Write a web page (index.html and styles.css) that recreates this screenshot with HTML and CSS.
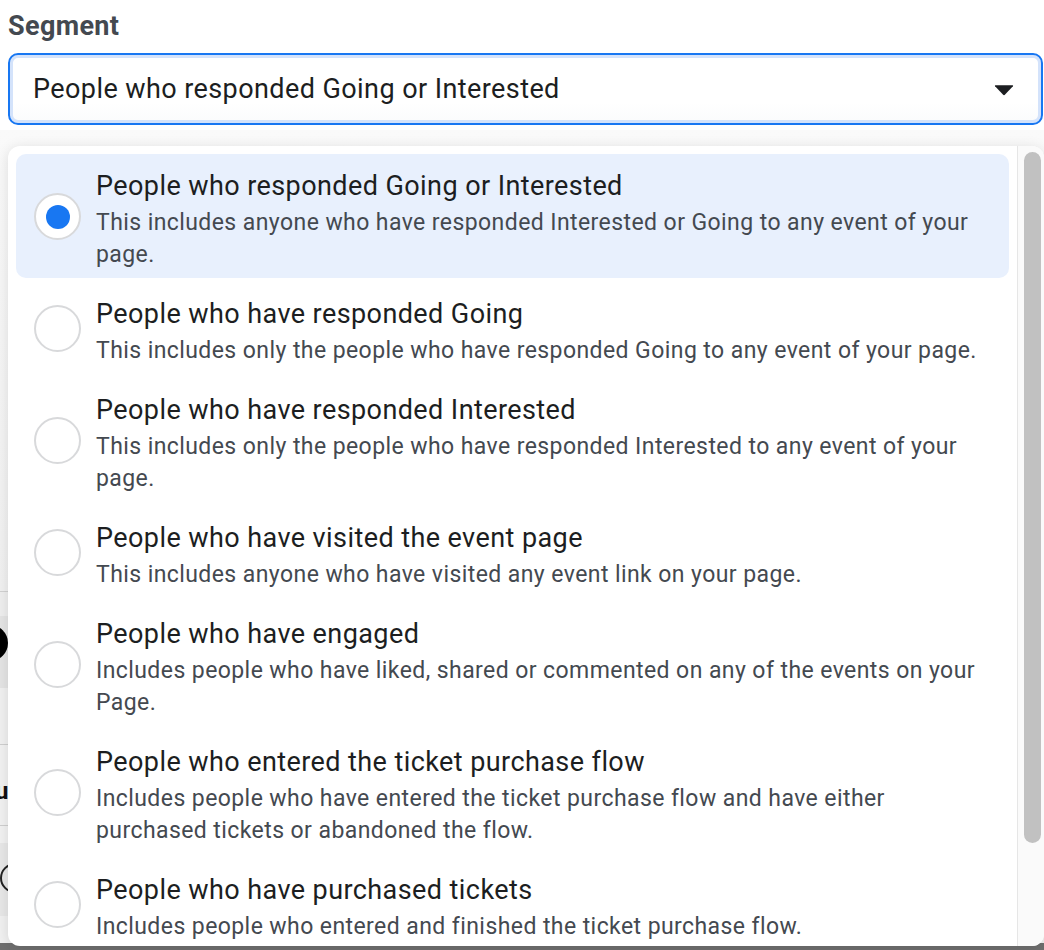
FILE: index.html
```html
<!DOCTYPE html>
<html>
<head>
<meta charset="utf-8">
<link rel="stylesheet" href="styles.css">
</head>
<body>
<div class="page">
  <div class="seg-label">Segment</div>
  <div class="select">
    <span class="select-text">People who responded Going or Interested</span>
    <svg class="caret" width="20" height="12" viewBox="0 0 20 12"><path d="M1.5 1.2 H18.5 Q19.6 1.2 18.9 2.2 L11.1 10.6 Q10 11.7 8.9 10.6 L1.1 2.2 Q0.4 1.2 1.5 1.2 Z" fill="#1c1e21"/></svg>
  </div>

  <div class="behind">
    <div class="b-row b1"></div>
    <div class="b-row b2"></div>
    <div class="b-row b3"><span class="b-dot"></span></div>
    <div class="b-row b4"></div>
    <div class="b-row b5"><span class="b-u">u</span></div>
    <div class="b-row b6"></div>
    <div class="b-row b7"><span class="b-ring"></span></div>
    <div class="b-row b8"></div>
    <div class="b-bottom"></div>
  </div>

  <div class="menu">
    <div class="list">
      <div class="item selected">
        <span class="radio on"></span>
        <div class="txt">
          <div class="title">People who responded Going or Interested</div>
          <div class="desc">This includes anyone who have responded Interested or Going to any event of your page.</div>
        </div>
      </div>
      <div class="item">
        <span class="radio"></span>
        <div class="txt">
          <div class="title">People who have responded Going</div>
          <div class="desc">This includes only the people who have responded Going to any event of your page.</div>
        </div>
      </div>
      <div class="item">
        <span class="radio"></span>
        <div class="txt">
          <div class="title">People who have responded Interested</div>
          <div class="desc">This includes only the people who have responded Interested to any event of your page.</div>
        </div>
      </div>
      <div class="item">
        <span class="radio"></span>
        <div class="txt">
          <div class="title">People who have visited the event page</div>
          <div class="desc">This includes anyone who have visited any event link on your page.</div>
        </div>
      </div>
      <div class="item">
        <span class="radio"></span>
        <div class="txt">
          <div class="title">People who have engaged</div>
          <div class="desc">Includes people who have liked, shared or commented on any of the events on your Page.</div>
        </div>
      </div>
      <div class="item">
        <span class="radio"></span>
        <div class="txt">
          <div class="title">People who entered the ticket purchase flow</div>
          <div class="desc">Includes people who have entered the ticket purchase flow and have either purchased tickets or abandoned the flow.</div>
        </div>
      </div>
      <div class="item">
        <span class="radio"></span>
        <div class="txt">
          <div class="title">People who have purchased tickets</div>
          <div class="desc">Includes people who entered and finished the ticket purchase flow.</div>
        </div>
      </div>
    </div>
    <div class="scrollbar"><div class="thumb"></div></div>
  </div>
</div>
</body>
</html>
```
FILE: styles.css
```css
html, body {
  margin: 0;
  padding: 0;
  background: #ffffff;
}
body {
  font-family: Roboto, "Liberation Sans", Arial, sans-serif;
  color: #1c1e21;
  width: 1044px;
  height: 950px;
  overflow: hidden;
}
.page {
  position: relative;
  width: 1044px;
  height: 950px;
  overflow: hidden;
}
.seg-label {
  padding: 11px 0 0 8px;
  height: 30px;
  line-height: 30px;
  font-size: 27px;
  font-weight: 700;
  letter-spacing: 0.35px;
  color: #444950;
}
.select {
  margin: 12px 1px 0 8px;
  height: 72px;
  box-sizing: border-box;
  border: 2px solid #1877f2;
  border-radius: 10px;
  box-shadow: inset 0 0 0 3px #d4e3fb;
  background: linear-gradient(#ffffff 70%, #fafbfc);
  display: flex;
  align-items: center;
  justify-content: space-between;
  padding: 0 27px 0 23px;
}
.select-text {
  font-size: 27px;
  letter-spacing: 0.42px;
  color: #1c1e21;
}
.caret {
  display: block;
  margin-top: 1px;
}

/* page content visible behind the open menu */
.behind {
  margin-top: 5px;
}
.b-row {
  position: relative;
  overflow: hidden;
  background: #f3f3f3;
}
.b1 { height: 461px; background: linear-gradient(#fafafa, #f1f1f1); border-bottom: 1px solid #d2d2d2; }
.b2 { height: 24px; background: #efefef; }
.b3 { height: 72px; background: #e5e5e5; }
.b4 { height: 56px; background: #f1f1f1; border-bottom: 1px solid #cfcfcf; }
.b5 { height: 80px; background: #f2f2f2; border-bottom: 1px solid #cfcfcf; }
.b6 { height: 17px; background: #f2f2f2; }
.b7 { height: 73px; background: #e8e8e8; }
.b8 { height: 27px; background: #f1f1f1; }
.b-bottom { height: 10px; background: #6f6f6f; }
.b-dot {
  position: absolute;
  left: -28px;
  top: 9px;
  width: 36px;
  height: 36px;
  border-radius: 50%;
  background: #000;
}
.b-u {
  position: absolute;
  left: -5px;
  top: 34px;
  font-size: 24px;
  font-weight: 700;
  line-height: 24px;
  color: #111;
}
.b-ring {
  position: absolute;
  left: 0;
  top: 20px;
  width: 30px;
  height: 30px;
  border-radius: 50%;
  border: 2px solid #222;
  box-sizing: border-box;
}

/* dropdown menu */
.menu {
  position: absolute;
  left: 8px;
  top: 146px;
  width: 1036px;
  height: 800px;
  background: #ffffff;
  border-radius: 12px;
  box-shadow: 0 2px 14px rgba(0, 0, 0, 0.12);
  display: flex;
  overflow: hidden;
}
.list {
  flex: 1;
  padding: 8px;
  display: flex;
  flex-direction: column;
  gap: 4px;
}
.item {
  display: flex;
  align-items: center;
  border-radius: 10px;
  padding: 12px 10px 7px 18px;
}
.item.selected {
  background: #e8f0fd;
}
.radio {
  flex: none;
  width: 47px;
  height: 47px;
  box-sizing: border-box;
  border: 2px solid #d8d9db;
  border-radius: 50%;
  background: #fff;
  margin-right: 15px;
  display: flex;
  align-items: center;
  justify-content: center;
  margin-top: -4px;
}
.radio.on::after {
  content: "";
  width: 24px;
  height: 24px;
  border-radius: 50%;
  background: #1877f2;
}
.txt {
  flex: 1;
  min-width: 0;
}
.title {
  font-size: 27px;
  letter-spacing: 0.42px;
  line-height: 41px;
  color: #1c1e21;
}
.desc {
  font-size: 23px;
  letter-spacing: 0.42px;
  line-height: 32px;
  color: #444950;
}
.scrollbar {
  flex: none;
  width: 27px;
  border-left: 1px solid #e6e6e6;
  background: #fafafa;
  padding-top: 6px;
  box-sizing: border-box;
}
.thumb {
  margin-left: 6px;
  width: 17px;
  height: 691px;
  border-radius: 9px;
  background: #c1c1c1;
}
```
